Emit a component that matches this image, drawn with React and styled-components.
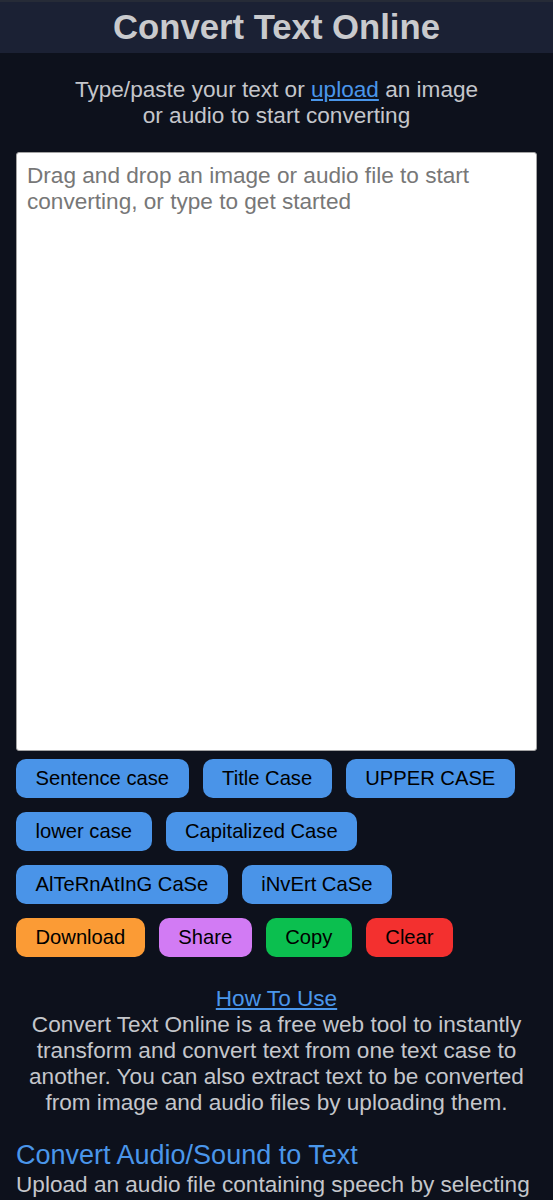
import React, { useState } from 'react';
import styled, { createGlobalStyle } from 'styled-components';

const GlobalStyle = createGlobalStyle`
	html, body {
		margin: 0;
		padding: 0;
		background: #0d111c;
	}
	body {
		font-family: 'Liberation Sans', Arial, Helvetica, sans-serif;
		font-size: 22.6px;
		color: #c4c6cb;
	}
	* {
		box-sizing: border-box;
	}
`;

const caseRows = [
	['Sentence case', 'Title Case', 'UPPER CASE'],
	['lower case', 'Capitalized Case'],
	['AlTeRnAtInG CaSe', 'iNvErt CaSe'],
];

const actionButtons = [
	{ label: 'Download', color: '#fb9b35' },
	{ label: 'Share', color: '#d27bf4' },
	{ label: 'Copy', color: '#0bbf4f' },
	{ label: 'Clear', color: '#f3302f' },
];

export default function App() {
	const [text, setText] = useState('');

	return (
		<>
			<GlobalStyle />
			<Header>
				<Title>Convert Text Online</Title>
			</Header>
			<Main>
				<Intro>
					Type/paste your text or <Link href='#'>upload</Link> an image
					<br />
					or audio to start converting
				</Intro>
				<TextBox
					value={text}
					onChange={(e) => setText(e.target.value)}
					placeholder='Drag and drop an image or audio file to start converting, or type to get started'
				/>
				<Buttons>
					{caseRows.map((row, i) => (
						<ButtonRow key={i}>
							{row.map((label) => (
								<Btn key={label}>{label}</Btn>
							))}
						</ButtonRow>
					))}
					<ButtonRow>
						{actionButtons.map((b) => (
							<Btn key={b.label} $bg={b.color}>
								{b.label}
							</Btn>
						))}
					</ButtonRow>
				</Buttons>
				<About>
					<Link href='#'>How To Use</Link>
					<br />
					Convert Text Online is a free web tool to instantly transform and
					convert text from one text case to another. You can also extract
					text to be converted from image and audio files by uploading them.
				</About>
				<SectionTitle>Convert Audio/Sound to Text</SectionTitle>
				<SectionText>
					Upload an audio file containing speech by selecting
				</SectionText>
			</Main>
		</>
	);
}

const Header = styled.header`
	height: 53px;
	display: flex;
	align-items: center;
	justify-content: center;
	background: #1b2134;
	border-top: 2px solid #262b37;
`;

const Title = styled.h1`
	margin: 0;
	font-size: 34.7px;
	font-weight: bold;
	color: #c9cacd;
	line-height: 1;
`;

const Main = styled.main`
	padding: 24px 16px 0 16px;
`;

const Intro = styled.p`
	margin: 0 0 23px 0;
	text-align: center;
	line-height: 26px;
	color: #c4c6cb;
`;

const Link = styled.a`
	color: #4a96ea;
	text-decoration: underline;
`;

const TextBox = styled.textarea`
	display: block;
	width: 521px;
	height: 599px;
	margin: 0;
	padding: 10px 10px;
	border: 1px solid #a3a3a3;
	border-radius: 3px;
	background: #ffffff;
	font-family: 'Liberation Sans', Arial, Helvetica, sans-serif;
	font-size: 22.6px;
	line-height: 26px;
	color: #222;
	resize: none;
	outline: none;

	&::placeholder {
		color: #777777;
	}
`;

const Buttons = styled.div`
	display: flex;
	flex-direction: column;
	gap: 14px;
	margin-top: 8px;
`;

const ButtonRow = styled.div`
	display: flex;
	gap: 14px;
`;

const Btn = styled.button`
	cursor: pointer;
	height: 39px;
	padding: 0 19.5px;
	border: none;
	border-radius: 10px;
	background: ${(p) => p.$bg || '#4a94e8'};
	color: #000;
	font-family: 'Liberation Sans', Arial, Helvetica, sans-serif;
	font-size: 20.2px;
	white-space: nowrap;
`;

const About = styled.p`
	margin: 29px 0 0 0;
	text-align: center;
	line-height: 26px;
	color: #c4c6cb;
`;

const SectionTitle = styled.h2`
	margin: 24px 0 0 0;
	font-size: 27px;
	font-weight: normal;
	line-height: 31px;
	color: #4a96ea;
`;

const SectionText = styled.p`
	margin: 1px 0 0 0;
	line-height: 26px;
	color: #c4c6cb;
	white-space: nowrap;
`;
